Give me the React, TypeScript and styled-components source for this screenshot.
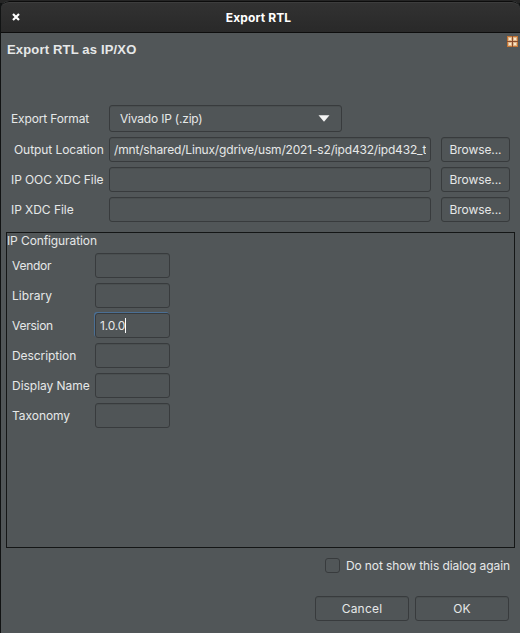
import React from "react";
import styled, { createGlobalStyle, css } from "styled-components";

const GlobalStyle = createGlobalStyle`
  * { box-sizing: border-box; }
  html, body { margin: 0; padding: 0; background: #1b1d1e; overflow: hidden; }
`;

const edge = "#383b3d";

const tracked = css<{ $tracking?: number }>`
  letter-spacing: ${({ $tracking = 0 }) => $tracking}px;
`;

const control = css`
  height: 25px;
  border: 1px solid ${edge};
  border-radius: 3px;
  background: #505557;
  color: #e6e8e8;
  font: inherit;
  box-shadow: inset 0 1px 0 rgba(0, 0, 0, 0.07);
`;

const Backdrop = styled.div`
  width: 520px;
  height: 633px;
  padding: 1px 0 0 1px;
  background: linear-gradient(#252525 0 3px, #111313 3px);
  font: 12px/16px Inter, sans-serif;
  color: #e6e8e8;
`;

const Window = styled.main`
  height: 632px;
  display: flex;
  flex-direction: column;
  border-radius: 8px 8px 0 0;
  background: #515658;
  overflow: hidden;
`;

const TitleBar = styled.header`
  height: 32px;
  flex: none;
  display: grid;
  grid-template-columns: 30px 1fr 34px;
  align-items: center;
  border-top: 1px solid #0c0c0c;
  border-bottom: 1px solid #0d0d0d;
  border-radius: 8px 8px 0 0;
  background: linear-gradient(#323232, #292929);
  box-shadow: inset 0 1px 0 #3d3d3d;
`;

const CloseButton = styled.button`
  display: flex;
  padding: 0 0 0 11px;
  border: 0;
  background: none;
`;

const Title = styled.h1`
  margin: 2px 0 0;
  text-align: center;
  font-size: 12px;
  line-height: 16px;
  font-weight: 700;
  letter-spacing: 0.12px;
  color: #fff;
`;

const Heading = styled.div`
  height: 72px;
  flex: none;
  display: flex;
  justify-content: space-between;
  align-items: flex-start;
  padding: 3px 1px 0 6px;
`;

const HeadingText = styled.h2`
  margin: 6px 0 0;
  font: bold 13px/16px "Liberation Sans", Arial, sans-serif;
  letter-spacing: 0.17px;
`;

const Form = styled.section`
  display: flex;
  flex-direction: column;
  gap: 5px;
  padding-left: 10px;
`;

const FormRow = styled.div`
  display: flex;
  align-items: center;
`;

const FormLabel = styled.label<{ $indent?: number; $tracking?: number }>`
  ${tracked}
  width: 98px;
  padding-left: ${({ $indent = 0 }) => $indent}px;
  white-space: nowrap;
`;

const Combo = styled.button`
  ${control}
  width: 233px;
  height: 27px;
  display: flex;
  align-items: center;
  justify-content: space-between;
  padding: 0 11px 0 10px;
  letter-spacing: -0.2px;
`;

const PathInput = styled.input`
  ${control}
  width: 322px;
  margin-right: 10px;
  padding: 0 4px;
  outline: 0;
  letter-spacing: -0.17px;
`;

const Button = styled.button<{ $width: number; $tracking?: number }>`
  ${control}
  ${tracked}
  width: ${({ $width }) => $width}px;
  padding: 0;
  text-align: center;
`;

const Panel = styled.section`
  height: 316px;
  flex: none;
  margin: 10px 5px 0;
  border: 1px solid #141616;
`;

const PanelTitle = styled.h3`
  margin: 0 0 4px;
  font: inherit;
  letter-spacing: -0.1px;
`;

const Fields = styled.div`
  display: flex;
  flex-direction: column;
  gap: 5px;
  padding-left: 5px;
`;

const FieldLabel = styled.label<{ $tracking?: number }>`
  ${tracked}
  width: 83px;
  white-space: nowrap;
`;

const Field = styled.div<{ $focused?: boolean }>`
  ${control}
  width: 75px;
  display: flex;
  align-items: center;
  padding-left: 4px;
  letter-spacing: -0.2px;
  ${({ $focused }) => $focused && "box-shadow: -1px -1px 0 #4b6f94;"}
`;

const Caret = styled.span`
  width: 1px;
  height: 15px;
  background: #fff;
`;

const Remember = styled.label`
  display: flex;
  align-items: center;
  justify-content: flex-end;
  gap: 6px;
  height: 15px;
  margin: 10px 10px 0 0;
  letter-spacing: -0.09px;
`;

const Checkbox = styled.span`
  width: 15px;
  height: 15px;
  border: 1px solid ${edge};
  border-radius: 3px;
`;

const Actions = styled.footer`
  display: flex;
  justify-content: flex-end;
  gap: 6px;
  margin: 23px 11px 0 0;
`;

const LogoIcon = () => (
  <svg width="12" height="12" viewBox="0 0 12 12" shapeRendering="crispEdges">
    <path fill="#c27434" d="M0 0h11v11H0z" />
    <path fill="#e0b689" d="M1 1h4v4H1zM6 1h4v4H6zM1 6h4v4H1zM6 6h4v4H6z" />
    <path fill="#f9e6cb" d="M2 2h2v2H2zM7 2h2v2H7zM2 7h2v2H2zM7 7h2v2H7z" />
    <path fill="#8a4b2c" d="M5 0h1v11H5zM0 5h11v1H0z" />
  </svg>
);

const paths = [
  {
    label: "Output Location",
    indent: 3,
    tracking: -0.07,
    value: "/mnt/shared/Linux/gdrive/usm/2021-s2/ipd432/ipd432_tarea",
  },
  { label: "IP OOC XDC File", indent: 0, tracking: -0.08, value: "" },
  { label: "IP XDC File", indent: 0, tracking: -0.05, value: "" },
];

const fields = [
  { name: "Vendor", tracking: -0.25 },
  { name: "Library", tracking: 0.05 },
  { name: "Version", tracking: -0.25 },
  { name: "Description", tracking: -0.07 },
  { name: "Display Name", tracking: -0.03 },
  { name: "Taxonomy", tracking: -0.05 },
];

export default function App() {
  return (
    <Backdrop>
      <GlobalStyle />
      <Window>
        <TitleBar>
          <CloseButton aria-label="Close">
            <svg width="8" height="8" viewBox="0 0 8 8">
              <path d="M1 1l6 6M7 1L1 7" stroke="#fff" strokeWidth="2.2" />
            </svg>
          </CloseButton>
          <Title>Export RTL</Title>
        </TitleBar>
        <Heading>
          <HeadingText>Export RTL as IP/XO</HeadingText>
          <LogoIcon />
        </Heading>
        <Form>
          <FormRow>
            <FormLabel $tracking={-0.15}>Export Format</FormLabel>
            <Combo>
              Vivado IP (.zip)
              <svg width="12" height="7" viewBox="0 0 12 7">
                <path d="M0.5 0.3h11L6 6.8z" fill="#f4f4f4" />
              </svg>
            </Combo>
          </FormRow>
          {paths.map((p) => (
            <FormRow key={p.label}>
              <FormLabel $indent={p.indent} $tracking={p.tracking}>
                {p.label}
              </FormLabel>
              <PathInput defaultValue={p.value} />
              <Button $width={69} $tracking={-0.1}>Browse...</Button>
            </FormRow>
          ))}
        </Form>
        <Panel>
          <PanelTitle>IP Configuration</PanelTitle>
          <Fields>
            {fields.map(({ name, tracking }) => (
              <FormRow key={name}>
                <FieldLabel $tracking={tracking}>{name}</FieldLabel>
                <Field $focused={name === "Version"}>
                  {name === "Version" && (
                    <>
                      1.0.0
                      <Caret />
                    </>
                  )}
                </Field>
              </FormRow>
            ))}
          </Fields>
        </Panel>
        <Remember>
          <Checkbox />
          Do not show this dialog again
        </Remember>
        <Actions>
          <Button $width={94} $tracking={0.2}>Cancel</Button>
          <Button $width={94} $tracking={0.1}>OK</Button>
        </Actions>
      </Window>
    </Backdrop>
  );
}
